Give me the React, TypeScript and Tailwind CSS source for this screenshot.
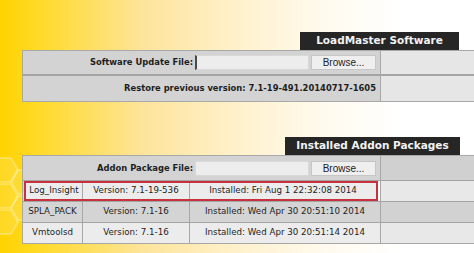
const label = "font-['DejaVu_Sans',Verdana,sans-serif] font-bold text-[8.4px] text-[#1e1e1e]";
const cell = "font-['DejaVu_Sans',Verdana,sans-serif] text-[8.7px] text-[#1e1e1e] flex items-center justify-center";

function Header({ title, width }: { title: string; width: number }) {
  return (
    <div className="flex justify-end">
      <div
        className="h-[18px] bg-[#262626] text-[#f2f2f2] font-['DejaVu_Sans',Verdana,sans-serif] font-bold text-[10.5px] flex items-center justify-center"
        style={{ width }}
      >
        {title}
      </div>
    </div>
  );
}

function FileRow({ text, caret }: { text: string; caret?: boolean }) {
  return (
    <div className="flex items-center h-full">
      <div className={`w-[172px] text-right pr-[2px] ${label}`}>{text}</div>
      <div
        className={`w-[114px] h-[15px] bg-[#ededed] border border-[#d8d8d8] ${caret ? "border-l-2 border-l-[#4a4a4a]" : ""}`}
      />
      <div className="ml-[2px] w-[65px] h-[15px] bg-[#efefef] border border-[#c6c6c6] flex items-center justify-center font-['Liberation_Sans',Arial,sans-serif] text-[10px] text-[#222]">
        Browse...
      </div>
    </div>
  );
}

function Hexes() {
  const hex = (cx: number, cy: number, r: number) => {
    const pts = [0, 1, 2, 3, 4, 5]
      .map((i) => {
        const a = (Math.PI / 3) * i;
        return `${cx + r * Math.cos(a)},${cy + r * Math.sin(a)}`;
      })
      .join(" ");
    return <polygon key={`${cx}-${cy}`} points={pts} />;
  };
  return (
    <svg className="absolute left-0 top-0" width="60" height="253" viewBox="0 0 60 253">
      <g fill="#fff2b0" fillOpacity="0.2" stroke="#fff6c8" strokeOpacity="0.35" strokeWidth="2">
        {hex(4, 170, 14)}
        {hex(25, 182, 14)}
        {hex(4, 196, 14)}
        {hex(25, 208, 14)}
        {hex(4, 222, 14)}
      </g>
    </svg>
  );
}

const rows = [
  { name: "Log_Insight", version: "Version: 7.1-19-536", installed: "Installed: Fri Aug 1 22:32:08 2014", light: true, mark: true },
  { name: "SPLA_PACK", version: "Version: 7.1-16", installed: "Installed: Wed Apr 30 20:51:10 2014", light: false, mark: false },
  { name: "Vmtoolsd", version: "Version: 7.1-16", installed: "Installed: Wed Apr 30 20:51:14 2014", light: true, mark: false },
];

export default function App() {
  return (
    <div className="relative w-[474px] h-[253px] overflow-hidden bg-[linear-gradient(90deg,#ffd200_0%,#ffda28_8%,#fde49a_30%,#fff1cc_50%,#fffaee_68%,#ffffff_85%)]">
      <Hexes />
      <div className="relative pt-[32px] pl-[22px] w-[474px]">
        <div className="pr-[15px]">
          <Header title="LoadMaster Software" width={159} />
        </div>
        <div className="flex border-t border-l border-b border-[#a8a8a8]">
          <div className="w-[357px] bg-[#d3d3d3]">
            <div className="h-[23px]">
              <FileRow text="Software Update File:" caret />
            </div>
            <div className="h-[2px] bg-[#a4a4a4]" />
            <div className={`h-[25px] flex items-center justify-end pr-[4px] ${label}`}>
              Restore previous version: 7.1-19-491.20140717-1605
            </div>
          </div>
          <div className="flex-1 border-l border-[#a8a8a8] bg-[#e6e6e6]">
            <div className="h-[23px]" />
            <div className="h-[2px] bg-[#a4a4a4]" />
            <div className="h-[25px]" />
          </div>
        </div>

        <div className="mt-[35px] pr-[14px]">
          <Header title="Installed Addon Packages" width={175} />
        </div>
        <div className="flex border-t border-l border-b border-[#a8a8a8]">
          <div className="w-[357px]">
            <div className="h-[24px] bg-[#d3d3d3]">
              <FileRow text="Addon Package File:" />
            </div>
            <div className="h-[1px] bg-[#a4a4a4]" />
            {rows.map((r, i) => (
              <div key={r.name}>
                {i > 0 && <div className="h-[1px] bg-[#a4a4a4]" />}
                <div
                  className={`flex h-[20px] ${r.light ? "bg-[#ececec]" : "bg-[#d4d4d4]"} ${
                    r.mark ? "border-2 border-[#c8323e] mr-[2px] ml-[1px]" : ""
                  }`}
                >
                  <div className={`${r.mark ? "w-[57px]" : "w-[60px]"} border-r border-[#a8a8a8] ${cell}`}>{r.name}</div>
                  <div className={`w-[107px] border-r border-[#a8a8a8] ${cell}`}>{r.version}</div>
                  <div className={`flex-1 ${cell}`}>{r.installed}</div>
                </div>
              </div>
            ))}
          </div>
          <div className="flex-1 border-l border-[#a8a8a8]">
            <div className="h-[24px] bg-[#d0d0d0]" />
            <div className="h-[1px] bg-[#a4a4a4]" />
            {rows.map((r, i) => (
              <div key={r.name}>
                {i > 0 && <div className="h-[1px] bg-[#a4a4a4]" />}
                <div className={`h-[20px] ${r.light ? "bg-[#e8e8e8]" : "bg-[#d2d2d2]"}`} />
              </div>
            ))}
          </div>
        </div>
      </div>
    </div>
  );
}
